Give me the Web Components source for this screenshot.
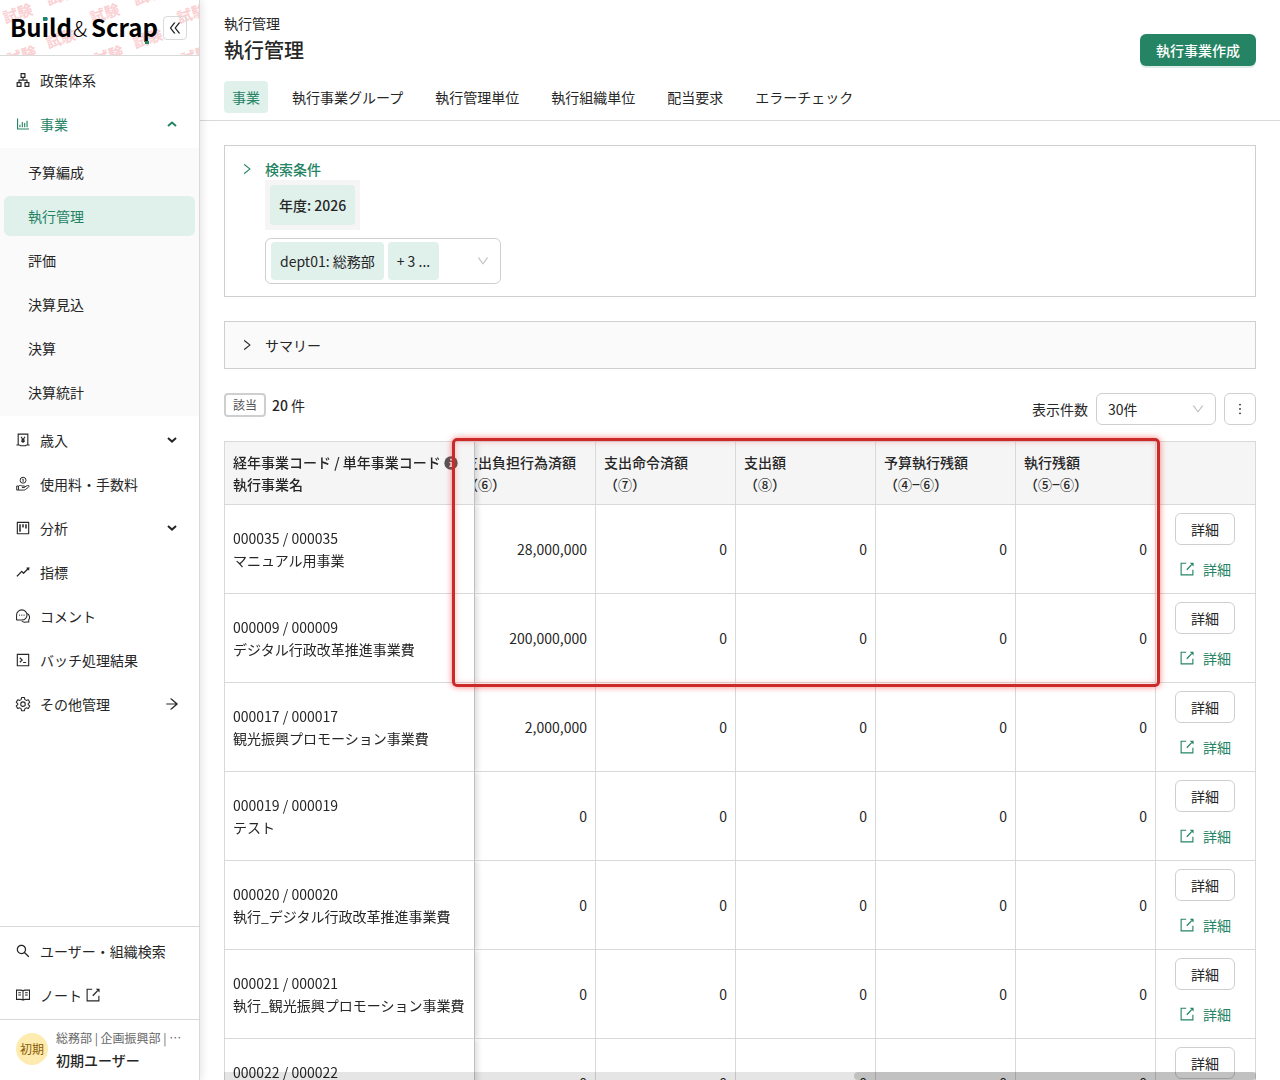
<!DOCTYPE html>
<html lang="ja">
<head>
<meta charset="utf-8">
<meta name="viewport" content="width=device-width, initial-scale=1">
<title>執行管理</title>
<style>
  body {
    margin: 0;
    font: 14px/22px "Noto Sans CJK JP", sans-serif;
    color: #262626;
    background: #fff;
    --green: #258463;
    --green-bg: #e0f0eb;
    --line: #d9d9d9;
    --box-line: #cfcfcf;
  }
</style>
</head>
<body>
<app-shell>
  <side-nav slot="side"></side-nav>
  <page-header data-crumb="執行管理" data-title="執行管理" data-action="執行事業作成"></page-header>
  <page-body>
    <filter-panel></filter-panel>
    <summary-panel>サマリー</summary-panel>
    <list-toolbar data-count="20"></list-toolbar>
    <budget-table></budget-table>
  </page-body>
</app-shell>

<script>
const ICONS = {
  doubleLeft: '<path d="M272.900 512l265.400-339.100c4.100-5.200.4-12.900-6.300-12.900h-77.300c-4.900 0-9.600 2.300-12.600 6.100L186.800 492.300a32 32 0 000 39.500l255.300 326.100c3 3.900 7.700 6.100 12.600 6.100H532c6.700 0 10.400-7.700 6.300-12.900L272.900 512zm304 0l265.400-339.100c4.100-5.200.4-12.900-6.300-12.900h-77.300c-4.900 0-9.600 2.300-12.600 6.100L490.800 492.300a32 32 0 000 39.500l255.300 326.100c3 3.900 7.700 6.100 12.600 6.100H836c6.700 0 10.400-7.700 6.300-12.900L576.900 512z"/>',
  right: '<path d="M765.700 486.800L314.900 134.700A8 8 0 00302 141v77.300c0 4.900 2.300 9.600 6.100 12.600l360 281.100-360 281.100c-3.900 3-6.100 7.700-6.100 12.600V883c0 6.700 7.700 10.400 12.900 6.300l450.800-352.100a32 32 0 000-50.400z"/>',
  down: '<path d="M884 256h-75c-5.100 0-9.900 2.500-12.900 6.600L512 654.200 227.900 262.600c-3-4.100-7.800-6.600-12.900-6.600h-75c-6.500 0-10.300 7.400-6.500 12.700l352.600 486.100c12.800 17.600 39 17.600 51.700 0l352.600-486.100c3.900-5.300.1-12.700-6.400-12.700z"/>',
  caretDown: '<path d="M170 350l342 300 342-300" fill="none" stroke="currentColor" stroke-width="170"/>',
  caretUp: '<path d="M170 680l342-300 342 300" fill="none" stroke="currentColor" stroke-width="170"/>',
  arrowRight: '<path d="M869 487.800L491.200 159.900c-2.900-2.500-6.600-3.900-10.500-3.900h-88.500c-7.400 0-10.800 9.200-5.200 14l350.200 304H152c-4.400 0-8 3.600-8 8v60c0 4.400 3.600 8 8 8h585.100L386.900 854c-5.600 4.900-2.200 14 5.200 14h91.500c1.900 0 3.800-.7 5.200-2L869 536.200a32 32 0 000-48.400z"/>',
  apartment: '<path d="M908 640H804V488c0-4.400-3.600-8-8-8H548v-96h108c8.800 0 16-7.200 16-16V80c0-8.800-7.200-16-16-16H368c-8.800 0-16 7.200-16 16v288c0 8.800 7.200 16 16 16h108v96H228c-4.400 0-8 3.600-8 8v152H116c-8.800 0-16 7.200-16 16v288c0 8.800 7.200 16 16 16h288c8.800 0 16-7.200 16-16V656c0-8.800-7.200-16-16-16H292v-88h440v88H620c-8.800 0-16 7.200-16 16v288c0 8.800 7.200 16 16 16h288c8.800 0 16-7.200 16-16V656c0-8.800-7.200-16-16-16zm-564 76v168H176V716h168zm84-408V140h168v168H428zm420 576H680V716h168v168z"/>',
  barChart: '<path d="M888 792H200V168c0-4.400-3.600-8-8-8h-56c-4.400 0-8 3.600-8 8v688c0 4.400 3.600 8 8 8h752c4.400 0 8-3.600 8-8v-56c0-4.400-3.600-8-8-8zm-600-80h56c4.400 0 8-3.600 8-8V560c0-4.400-3.600-8-8-8h-56c-4.400 0-8 3.600-8 8v144c0 4.400 3.600 8 8 8zm152 0h56c4.400 0 8-3.600 8-8V384c0-4.400-3.600-8-8-8h-56c-4.400 0-8 3.600-8 8v320c0 4.400 3.600 8 8 8zm152 0h56c4.400 0 8-3.600 8-8V462c0-4.400-3.600-8-8-8h-56c-4.400 0-8 3.600-8 8v242c0 4.400 3.600 8 8 8zm152 0h56c4.400 0 8-3.600 8-8V304c0-4.400-3.600-8-8-8h-56c-4.400 0-8 3.600-8 8v400c0 4.400 3.600 8 8 8z"/>',
  moneyBook: '<g fill="none" stroke="currentColor" stroke-width="72"><path d="M204 830V134h616v696M90 830h180q36 0 60 26t60 26h244q36 0 60-26t60-26h180"/><path d="M386 300l126 200 126-200M512 490v220M400 520h224M400 610h224"/></g>',
  moneyHand: '<g fill="none" stroke="currentColor" stroke-width="62"><circle cx="516" cy="270" r="190"/><path d="M470 200h50v170"/><path d="M110 640h110v260H110zM220 660c80-80 170-60 230-20h140c66 0 56 100-10 100H440M610 710l190-100c76-38 138 38 76 92L690 850c-40 34-76 50-140 50H220"/></g>',
  project: '<path d="M280 752h80c4.400 0 8-3.600 8-8V280c0-4.400-3.600-8-8-8h-80c-4.400 0-8 3.600-8 8v464c0 4.400 3.600 8 8 8zm192-280h80c4.400 0 8-3.600 8-8V280c0-4.400-3.600-8-8-8h-80c-4.400 0-8 3.600-8 8v184c0 4.400 3.600 8 8 8zm192 72h80c4.400 0 8-3.600 8-8V280c0-4.400-3.600-8-8-8h-80c-4.400 0-8 3.600-8 8v256c0 4.400 3.600 8 8 8zm216-432H144c-17.700 0-32 14.300-32 32v736c0 17.700 14.300 32 32 32h736c17.700 0 32-14.300 32-32V144c0-17.700-14.300-32-32-32zm-40 728H184V184h656v656z"/>',
  rise: '<path d="M917 211.100l-199.200 24c-6.600.8-9.400 8.900-4.700 13.600l59.300 59.300-226 226-101.800-101.700c-6.300-6.300-16.400-6.200-22.600 0L100.300 754.100a8 8 0 000 11.300l45 45.200c3.100 3.100 8.200 3.100 11.300 0L433.300 534 535 635.700c6.300 6.200 16.400 6.200 22.600 0L829 364.500l59.300 59.300a8 8 0 0013.600-4.700l24-199.200c.7-5.100-3.700-9.500-8.900-8.800z"/>',
  comment: '<g fill="none" stroke="currentColor" stroke-width="66"><path d="M100 760V440A335 325 0 11440 770H110z"/><path d="M790 350c160 100 180 290 90 410v130H700c-100 36-200 8-260-60"/></g><circle cx="290" cy="450" r="42"/><circle cx="435" cy="450" r="42"/><circle cx="580" cy="450" r="42"/>',
  code: '<g fill="none" stroke="currentColor" stroke-width="72"><path d="M148 148h728v728H148z"/><path d="M310 370l150 142-150 142M520 670h190"/></g>',
  setting: '<g fill="none" stroke="currentColor" stroke-width="68" stroke-linejoin="round"><path d="M420 100h184l30 130 90 52 128-40 92 160-98 92v52l98 92-92 160-128-40-90 52-30 130H420l-30-130-90-52-128 40-92-160 98-92v-52l-98-92 92-160 128 40 90-52z"/><circle cx="512" cy="520" r="145"/></g>',
  search: '<path d="M909.600 854.500L649.900 594.800C690.200 542.700 712 479 712 412c0-80.200-31.300-155.400-87.900-212.100-56.600-56.700-132-87.900-212.100-87.900s-155.500 31.300-212.100 87.900C143.200 256.500 112 331.800 112 412c0 80.100 31.300 155.500 87.900 212.100C256.500 680.800 331.800 712 412 712c67 0 130.600-21.800 182.700-62l259.700 259.600a8.200 8.200 0 0011.600 0l43.600-43.500a8.200 8.200 0 000-11.600zM570.400 570.400C528 612.700 471.800 636 412 636s-116-23.300-158.400-65.600C211.300 528 188 471.800 188 412s23.300-116.100 65.600-158.400C296 211.300 352.200 188 412 188s116.100 23.200 158.400 65.600S636 352.200 636 412s-23.300 116.100-65.600 158.400z"/>',
  read: '<g fill="none" stroke="currentColor" stroke-width="66"><path d="M512 246q-60-46-146-46H97v592h269q88 0 146 46 58-46 146-46h269V200H658q-86 0-146 46v580"/><path d="M210 370h170M210 510h170M644 370h170M644 510h170"/></g>',
  external: '<path d="M460 142H136v744h752V560" fill="none" stroke="currentColor" stroke-width="72"/><path d="M500 560l310-330" fill="none" stroke="currentColor" stroke-width="84"/><path d="M690 106h240v240z"/>',
  more: '<path d="M456 231a56 56 0 10112 0 56 56 0 10-112 0zm0 280a56 56 0 10112 0 56 56 0 10-112 0zm0 280a56 56 0 10112 0 56 56 0 10-112 0z"/>',
  info: '<circle cx="512" cy="512" r="490"/><path d="M450 210h130v120H450zM400 430h180v290h60v80H390v-80h70V510h-60z" fill="#f5f5f5"/>'
};

class UiIcon extends HTMLElement {
  connectedCallback() {
    const root = this.attachShadow({mode: 'open'});
    root.innerHTML = `
      <style>
        :host { display: inline-block; flex: none; width: 16px; height: 16px; }
        svg { display: block; width: 100%; height: 100%; fill: currentColor; }
      </style>
      <svg viewBox="0 0 1024 1024" aria-hidden="true">${ICONS[this.getAttribute('name')]}</svg>
    `;
  }
}

class AppShell extends HTMLElement {
  connectedCallback() {
    const root = this.attachShadow({mode: 'open'});
    root.innerHTML = `
      <style>
        :host {
          display: grid;
          grid-template-columns: 200px minmax(0, 1fr);
          height: 100vh;
          overflow: hidden;
        }
        main { overflow: auto; scrollbar-width: none; }
      </style>
      <slot name="side"></slot>
      <main><slot></slot></main>
    `;
  }
}

class BrandBar extends HTMLElement {
  connectedCallback() {
    const root = this.attachShadow({mode: 'open'});
    // faint stamps, laid out in staggered rows
    const stamps = [[18, 14], [105, 14], [192, 14], [61, -4], [148, -4], [61, 39], [148, 39], [22, 56], [109, 56], [196, 56]]
      .map(([x, y]) => `<text transform="translate(${x} ${y}) rotate(-18)" y="5">試験</text>`)
      .join('');
    root.innerHTML = `
      <style>
        :host {
          display: flex;
          justify-content: space-between;
          align-items: center;
          position: relative;
          box-sizing: border-box;
          height: 56px;
          padding: 0 12px;
          border-bottom: 1px solid var(--line);
          overflow: hidden;
        }
        .stamps {
          position: absolute;
          inset: 0;
          width: 100%;
          height: 100%;
          fill: #fad0d3;
          font-size: 15px;
          font-weight: 700;
          text-anchor: middle;
        }
        .logo { position: relative; width: 148px; height: 34px; overflow: visible; }
        .logo text { font: 700 24px "Noto Sans CJK JP", sans-serif; fill: #000; }
        .logo .amp { font-weight: 300; font-size: 22px; }
        button {
          position: relative;
          display: grid;
          place-items: center;
          flex: none;
          width: 24px;
          height: 24px;
          padding: 0;
          border: 1px solid var(--line);
          border-radius: 4px;
          background: transparent;
          color: #262626;
        }
      </style>
      <svg class="stamps" aria-hidden="true">${stamps}</svg>
      <svg class="logo" viewBox="0 0 148 34">
        <text x="-2" y="26">Build</text>
        <text class="amp" x="61" y="26">&amp;</text>
        <text x="79" y="26">Scrap</text>
        <rect x="31" y="6" width="4" height="4" fill="#258463"/>
        <rect x="133" y="30" width="4" height="3" fill="#258463"/>
      </svg>
      <button type="button" aria-label="メニューを閉じる"><ui-icon name="doubleLeft"></ui-icon></button>
    `;
  }
}

class NavItem extends HTMLElement {
  connectedCallback() {
    const root = this.attachShadow({mode: 'open'});
    const icon = this.getAttribute('icon');
    const mark = this.getAttribute('mark');
    // groups that open and close are buttons, the others are links
    const toggle = mark && mark.startsWith('caret');
    const tag = toggle ? 'button type="button"' : 'a href="#"';
    root.innerHTML = `
      <style>
        :host { display: block; margin: 0 4px; }
        a, button {
          display: flex;
          align-items: center;
          box-sizing: border-box;
          width: 100%;
          height: 40px;
          padding: 0 15px 0 11px;
          border: 0;
          border-radius: 6px;
          background: none;
          color: inherit;
          font: inherit;
          text-align: left;
          text-decoration: none;
        }
        .label { flex: 1; display: flex; align-items: center; gap: 3px; white-space: nowrap; }
        .lead { margin-right: 9px; }
        .caret { width: 12px; height: 12px; margin-right: 2px; }
        :host([sub]) a { padding-left: 24px; }
        :host([open]), :host([active]) { color: var(--green); }
        :host([active]) a { background: var(--green-bg); }
      </style>
      <${tag}>
        ${icon ? `<ui-icon class="lead" name="${icon}"></ui-icon>` : ''}
        <span class="label"><slot></slot></span>
        ${mark ? `<ui-icon class="${toggle ? 'caret' : 'go'}" name="${mark}"></ui-icon>` : ''}
      </${toggle ? 'button' : 'a'}>
    `;
  }
}

class SideNav extends HTMLElement {
  connectedCallback() {
    const root = this.attachShadow({mode: 'open'});
    root.innerHTML = `
      <style>
        :host {
          display: flex;
          flex-direction: column;
          min-height: 0;
          border-right: 1px solid var(--line);
          box-shadow: 2px 0 8px rgba(0, 0, 0, 0.1);
          z-index: 1;
        }
        nav { display: flex; flex-direction: column; gap: 4px; padding: 4px 0; }
        .main { flex: 1; min-height: 0; overflow: auto; scrollbar-width: none; }
        .sub { display: flex; flex-direction: column; gap: 4px; padding: 4px 0; background: #fafafa; }
        .foot { border-top: 1px solid var(--line); }
        .user {
          display: flex;
          align-items: center;
          gap: 8px;
          box-sizing: border-box;
          height: 61px;
          padding: 0 16px 2px;
          border-top: 1px solid var(--line);
        }
        .avatar {
          display: grid;
          place-items: center;
          flex: none;
          width: 32px;
          height: 32px;
          border-radius: 50%;
          background: #fdebb0;
          color: #8a5a00;
          font-size: 12px;
        }
        .who { white-space: nowrap; }
        .dept { font-size: 12px; color: #666; }
        .name { font-weight: 500; }
      </style>
      <brand-bar></brand-bar>
      <nav class="main">
        <nav-item icon="apartment">政策体系</nav-item>
        <nav-item icon="barChart" mark="caretUp" open>事業</nav-item>
        <div class="sub">
          <nav-item sub>予算編成</nav-item>
          <nav-item sub active>執行管理</nav-item>
          <nav-item sub>評価</nav-item>
          <nav-item sub>決算見込</nav-item>
          <nav-item sub>決算</nav-item>
          <nav-item sub>決算統計</nav-item>
        </div>
        <nav-item icon="moneyBook" mark="caretDown">歳入</nav-item>
        <nav-item icon="moneyHand">使用料・手数料</nav-item>
        <nav-item icon="project" mark="caretDown">分析</nav-item>
        <nav-item icon="rise">指標</nav-item>
        <nav-item icon="comment">コメント</nav-item>
        <nav-item icon="code">バッチ処理結果</nav-item>
        <nav-item icon="setting" mark="arrowRight">その他管理</nav-item>
      </nav>
      <nav class="foot">
        <nav-item icon="search">ユーザー・組織検索</nav-item>
        <nav-item icon="read">ノート<ui-icon name="external"></ui-icon></nav-item>
      </nav>
      <div class="user">
        <span class="avatar">初期</span>
        <div class="who">
          <div class="dept">総務部 | 企画振興部 | …</div>
          <div class="name">初期ユーザー</div>
        </div>
      </div>
    `;
  }
}

class PageHeader extends HTMLElement {
  connectedCallback() {
    const root = this.attachShadow({mode: 'open'});
    const tabs = ['事業', '執行事業グループ', '執行管理単位', '執行組織単位', '配当要求', 'エラーチェック'];
    root.innerHTML = `
      <style>
        :host { display: block; padding: 12px 24px 7px; border-bottom: 1px solid var(--line); }
        .top { display: flex; justify-content: space-between; align-items: center; }
        h1 { margin: 0; font-size: 20px; line-height: 32px; font-weight: 500; }
        .action {
          height: 32px;
          margin-top: 22px;
          padding: 0 16px;
          border: 0;
          border-radius: 6px;
          background: var(--green);
          box-shadow: 0 2px 0 rgba(37, 132, 99, 0.15);
          color: #fff;
          font: inherit;
          font-weight: 500;
        }
        .tabs { display: flex; gap: 16px; margin-top: 15px; }
        .tabs a {
          padding: 5px 8px;
          border-radius: 4px;
          color: inherit;
          text-decoration: none;
          white-space: nowrap;
        }
        .tabs a.on { background: var(--green-bg); color: var(--green); }
      </style>
      <div class="top">
        <div>
          <div>${this.getAttribute('data-crumb')}</div>
          <h1>${this.getAttribute('data-title')}</h1>
        </div>
        <button class="action" type="button">${this.getAttribute('data-action')}</button>
      </div>
      <nav class="tabs">
        ${tabs.map((t, i) => `<a href="#" class="${i ? '' : 'on'}">${t}</a>`).join('')}
      </nav>
    `;
  }
}

class PageBody extends HTMLElement {
  connectedCallback() {
    const root = this.attachShadow({mode: 'open'});
    root.innerHTML = `
      <style>
        :host { display: flex; flex-direction: column; gap: 24px; padding: 24px 24px 0; }
      </style>
      <slot></slot>
    `;
  }
}

class FilterPanel extends HTMLElement {
  connectedCallback() {
    const root = this.attachShadow({mode: 'open'});
    root.innerHTML = `
      <style>
        :host {
          display: flex;
          align-items: flex-start;
          gap: 11px;
          padding: 12px 15px;
          border: 1px solid var(--box-line);
        }
        .toggle { display: flex; padding: 4px 0; border: 0; background: none; color: var(--green); }
        .toggle ui-icon { width: 14px; height: 14px; }
        .title { color: var(--green); font-weight: 500; }
        .tag {
          padding: 8px 9px;
          border-radius: 4px;
          background: var(--green-bg);
          white-space: nowrap;
        }
        .year { display: flex; width: max-content; padding: 5px; background: #f5f5f5; font-weight: 500; }
        .year .tag { padding: 9px; }
        .picker {
          display: flex;
          align-items: center;
          gap: 4px;
          box-sizing: border-box;
          width: 236px;
          height: 46px;
          margin-top: 8px;
          padding: 0 10px 0 5px;
          border: 1px solid var(--box-line);
          border-radius: 6px;
          background: #fff;
          color: inherit;
          font: inherit;
        }
        .picker ui-icon { width: 14px; height: 14px; margin-left: auto; color: #bfbfbf; }
      </style>
      <button class="toggle" type="button" aria-label="検索条件を開く"><ui-icon name="right"></ui-icon></button>
      <div>
        <div class="title">検索条件</div>
        <div class="year"><span class="tag">年度: 2026</span></div>
        <button class="picker" type="button" aria-haspopup="listbox">
          <span class="tag">dept01: 総務部</span>
          <span class="tag">+ 3 ...</span>
          <ui-icon name="down"></ui-icon>
        </button>
      </div>
    `;
  }
}

class SummaryPanel extends HTMLElement {
  connectedCallback() {
    const root = this.attachShadow({mode: 'open'});
    root.innerHTML = `
      <style>
        :host { display: block; border: 1px solid var(--box-line); background: #fafafa; }
        button {
          display: flex;
          align-items: center;
          gap: 11px;
          width: 100%;
          padding: 12px 15px;
          border: 0;
          background: none;
          color: inherit;
          font: inherit;
        }
        ui-icon { width: 14px; height: 14px; }
      </style>
      <button type="button"><ui-icon name="right"></ui-icon><slot></slot></button>
    `;
  }
}

class ListToolbar extends HTMLElement {
  connectedCallback() {
    const root = this.attachShadow({mode: 'open'});
    root.innerHTML = `
      <style>
        :host { display: flex; justify-content: space-between; align-items: flex-start; margin-bottom: -8px; }
        .count { display: flex; align-items: center; gap: 6px; }
        .count b { font-weight: 500; }
        .badge {
          padding: 0 7px;
          border: 2px solid var(--box-line);
          border-radius: 4px;
          font-size: 12px;
          line-height: 20px;
          color: #555;
        }
        .tools { display: flex; align-items: center; gap: 8px; }
        .size { position: relative; }
        select {
          appearance: none;
          width: 120px;
          height: 32px;
          padding: 0 11px;
          border: 1px solid var(--box-line);
          border-radius: 6px;
          background: #fff;
          color: inherit;
          font: inherit;
        }
        .size ui-icon {
          position: absolute;
          right: 11px;
          top: 9px;
          width: 14px;
          height: 14px;
          color: #bfbfbf;
          pointer-events: none;
        }
        .more {
          display: grid;
          place-items: center;
          width: 32px;
          height: 32px;
          padding: 0;
          border: 1px solid var(--box-line);
          border-radius: 6px;
          background: #fff;
          color: inherit;
        }
      </style>
      <div class="count">
        <span class="badge">該当</span>
        <span><b>${this.getAttribute('data-count')}</b> 件</span>
      </div>
      <div class="tools">
        <label for="size">表示件数</label>
        <div class="size">
          <select id="size"><option>30件</option></select>
          <ui-icon name="down"></ui-icon>
        </div>
        <button class="more" type="button" aria-label="その他"><ui-icon name="more"></ui-icon></button>
      </div>
    `;
  }
}

class BudgetTable extends HTMLElement {
  connectedCallback() {
    const root = this.attachShadow({mode: 'open'});
    const cols = [
      ['支出負担行為済額', '（⑥）'],
      ['支出命令済額', '（⑦）'],
      ['支出額', '（⑧）'],
      ['予算執行残額', '（④−⑥）'],
      ['執行残額', '（⑤−⑥）']
    ];
    const rows = [
      ['000035', 'マニュアル用事業', '28,000,000'],
      ['000009', 'デジタル行政改革推進事業費', '200,000,000'],
      ['000017', '観光振興プロモーション事業費', '2,000,000'],
      ['000019', 'テスト', '0'],
      ['000020', '執行_デジタル行政改革推進事業費', '0'],
      ['000021', '執行_観光振興プロモーション事業費', '0'],
      ['000022', '&nbsp;', '0']
    ];
    root.innerHTML = `
      <style>
        :host { display: block; position: relative; }
        .scroll {
          overflow-x: auto;
          scrollbar-width: none;
          border-left: 1px solid var(--line);
          border-top: 1px solid var(--line);
        }
        table {
          width: 100%;
          min-width: 1050px;
          table-layout: fixed;
          border-collapse: separate;
          border-spacing: 0;
        }
        .c-name { width: 250px; }
        .c-act { width: 100px; }
        th, td {
          box-sizing: border-box;
          padding: 8px;
          border-right: 1px solid var(--line);
          border-bottom: 1px solid var(--line);
        }
        th {
          padding: 9px 8px;
          background: #f5f5f5;
          font-weight: 500;
          text-align: left;
          white-space: nowrap;
        }
        td { text-align: right; background: #fff; }
        td:last-child { padding-right: 9px; }
        .name {
          position: sticky;
          left: 0;
          z-index: 1;
          text-align: left;
          white-space: nowrap;
          border-right-color: #bfbfbf;
          box-shadow: 3px 0 5px rgba(0, 0, 0, 0.12);
          clip-path: inset(0 -10px 0 0);
        }
        .name ui-icon { width: 14px; height: 14px; margin-left: 3px; vertical-align: -2px; color: #555; }
        .acts { display: flex; flex-direction: column; align-items: center; gap: 8px; }
        .acts button {
          width: 60px;
          height: 32px;
          padding: 0;
          border: 1px solid var(--box-line);
          border-radius: 6px;
          background: #fff;
          color: inherit;
          font: inherit;
        }
        .acts a {
          display: flex;
          align-items: center;
          gap: 8px;
          height: 32px;
          color: var(--green);
          text-decoration: none;
        }
        /* frame round the amounts of the first two rows */
        .frame {
          position: absolute;
          z-index: 2;
          box-sizing: border-box;
          top: -3px;
          left: 228px;
          right: 96px;
          height: 249px;
          border: 3px solid #cb2a2a;
          border-radius: 5px;
          box-shadow: 0 0 6px rgba(255, 40, 40, 0.6), inset 0 0 6px rgba(255, 40, 40, 0.3);
          pointer-events: none;
        }
        .bar {
          position: sticky;
          bottom: 0;
          z-index: 3;
          display: flex;
          justify-content: flex-end;
          height: 8px;
          margin-top: -8px;
          background: rgba(0, 0, 0, 0.1);
        }
        .thumb { width: 39%; border-radius: 4px; background: rgba(0, 0, 0, 0.16); }
      </style>
      <div class="scroll">
        <table>
          <colgroup><col class="c-name">${'<col>'.repeat(cols.length)}<col class="c-act"></colgroup>
          <thead>
            <tr>
              <th class="name">経年事業コード / 単年事業コード<ui-icon name="info"></ui-icon><br>執行事業名</th>
              ${cols.map(c => `<th>${c[0]}<br>${c[1]}</th>`).join('')}
              <th></th>
            </tr>
          </thead>
          <tbody>
            ${rows.map(([code, name, amount]) => `
              <tr>
                <td class="name">${code} / ${code}<br>${name}</td>
                <td>${amount}</td>
                ${'<td>0</td>'.repeat(cols.length - 1)}
                <td>
                  <div class="acts">
                    <button type="button">詳細</button>
                    <a href="#"><ui-icon name="external"></ui-icon>詳細</a>
                  </div>
                </td>
              </tr>`).join('')}
          </tbody>
        </table>
      </div>
      <div class="frame"></div>
      <div class="bar"><div class="thumb"></div></div>
    `;
    this.toEnd();
    window.addEventListener('load', () => this.toEnd());
  }

  toEnd() {
    const box = this.shadowRoot.querySelector('.scroll');
    box.scrollLeft = box.scrollWidth;
  }
}

customElements.define('ui-icon', UiIcon);
customElements.define('app-shell', AppShell);
customElements.define('brand-bar', BrandBar);
customElements.define('nav-item', NavItem);
customElements.define('side-nav', SideNav);
customElements.define('page-header', PageHeader);
customElements.define('page-body', PageBody);
customElements.define('filter-panel', FilterPanel);
customElements.define('summary-panel', SummaryPanel);
customElements.define('list-toolbar', ListToolbar);
customElements.define('budget-table', BudgetTable);
</script>
</body>
</html>
